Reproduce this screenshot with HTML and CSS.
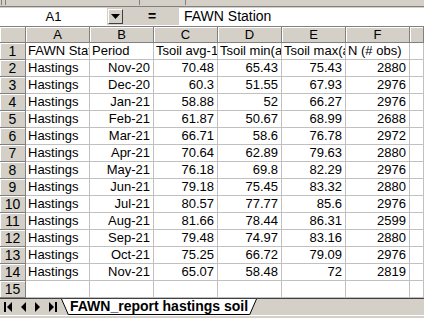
FILE: index.html
```html
<!DOCTYPE html>
<html lang="en">
<head>
  <meta charset="UTF-8">
  <title>FAWN_report hastings soil</title>
  <link rel="stylesheet" href="styles.css">
</head>
<body>

  <div class="toolbar-strip">
    <span class="grip"></span>
    <span class="sep sep-1"></span>
    <span class="sep sep-2"></span>
  </div>

  <div class="formula-bar">
    <div class="name-box">A1</div>
    <div class="name-drop">
      <svg width="9" height="5" viewBox="0 0 9 5"><polygon points="0,0 9,0 4.5,5" fill="#000"/></svg>
    </div>
    <div class="equals">=</div>
    <div class="formula-input">FAWN Station</div>
  </div>

  <div class="sheet">
    <div class="hdr corner"></div>
    <div class="hdr">A</div>
    <div class="hdr">B</div>
    <div class="hdr">C</div>
    <div class="hdr">D</div>
    <div class="hdr">E</div>
    <div class="hdr">F</div>
    <div class="hdr"></div>

    <div class="rowhdr">1</div>
    <div class="cell">FAWN Station</div>
    <div class="cell">Period</div>
    <div class="cell">Tsoil avg-10cm</div>
    <div class="cell">Tsoil min(avg)</div>
    <div class="cell">Tsoil max(avg)</div>
    <div class="cell">N (# obs)</div>
    <div class="cell"></div>

    <div class="rowhdr">2</div>
    <div class="cell">Hastings</div>
    <div class="cell num">Nov-20</div>
    <div class="cell num">70.48</div>
    <div class="cell num">65.43</div>
    <div class="cell num">75.43</div>
    <div class="cell num">2880</div>
    <div class="cell"></div>

    <div class="rowhdr">3</div>
    <div class="cell">Hastings</div>
    <div class="cell num">Dec-20</div>
    <div class="cell num">60.3</div>
    <div class="cell num">51.55</div>
    <div class="cell num">67.93</div>
    <div class="cell num">2976</div>
    <div class="cell"></div>

    <div class="rowhdr">4</div>
    <div class="cell">Hastings</div>
    <div class="cell num">Jan-21</div>
    <div class="cell num">58.88</div>
    <div class="cell num">52</div>
    <div class="cell num">66.27</div>
    <div class="cell num">2976</div>
    <div class="cell"></div>

    <div class="rowhdr">5</div>
    <div class="cell">Hastings</div>
    <div class="cell num">Feb-21</div>
    <div class="cell num">61.87</div>
    <div class="cell num">50.67</div>
    <div class="cell num">68.99</div>
    <div class="cell num">2688</div>
    <div class="cell"></div>

    <div class="rowhdr">6</div>
    <div class="cell">Hastings</div>
    <div class="cell num">Mar-21</div>
    <div class="cell num">66.71</div>
    <div class="cell num">58.6</div>
    <div class="cell num">76.78</div>
    <div class="cell num">2972</div>
    <div class="cell"></div>

    <div class="rowhdr">7</div>
    <div class="cell">Hastings</div>
    <div class="cell num">Apr-21</div>
    <div class="cell num">70.64</div>
    <div class="cell num">62.89</div>
    <div class="cell num">79.63</div>
    <div class="cell num">2880</div>
    <div class="cell"></div>

    <div class="rowhdr">8</div>
    <div class="cell">Hastings</div>
    <div class="cell num">May-21</div>
    <div class="cell num">76.18</div>
    <div class="cell num">69.8</div>
    <div class="cell num">82.29</div>
    <div class="cell num">2976</div>
    <div class="cell"></div>

    <div class="rowhdr">9</div>
    <div class="cell">Hastings</div>
    <div class="cell num">Jun-21</div>
    <div class="cell num">79.18</div>
    <div class="cell num">75.45</div>
    <div class="cell num">83.32</div>
    <div class="cell num">2880</div>
    <div class="cell"></div>

    <div class="rowhdr">10</div>
    <div class="cell">Hastings</div>
    <div class="cell num">Jul-21</div>
    <div class="cell num">80.57</div>
    <div class="cell num">77.77</div>
    <div class="cell num">85.6</div>
    <div class="cell num">2976</div>
    <div class="cell"></div>

    <div class="rowhdr">11</div>
    <div class="cell">Hastings</div>
    <div class="cell num">Aug-21</div>
    <div class="cell num">81.66</div>
    <div class="cell num">78.44</div>
    <div class="cell num">86.31</div>
    <div class="cell num">2599</div>
    <div class="cell"></div>

    <div class="rowhdr">12</div>
    <div class="cell">Hastings</div>
    <div class="cell num">Sep-21</div>
    <div class="cell num">79.48</div>
    <div class="cell num">74.97</div>
    <div class="cell num">83.16</div>
    <div class="cell num">2880</div>
    <div class="cell"></div>

    <div class="rowhdr">13</div>
    <div class="cell">Hastings</div>
    <div class="cell num">Oct-21</div>
    <div class="cell num">75.25</div>
    <div class="cell num">66.72</div>
    <div class="cell num">79.09</div>
    <div class="cell num">2976</div>
    <div class="cell"></div>

    <div class="rowhdr">14</div>
    <div class="cell">Hastings</div>
    <div class="cell num">Nov-21</div>
    <div class="cell num">65.07</div>
    <div class="cell num">58.48</div>
    <div class="cell num">72</div>
    <div class="cell num">2819</div>
    <div class="cell"></div>

    <div class="rowhdr">15</div>
    <div class="cell"></div>
    <div class="cell"></div>
    <div class="cell"></div>
    <div class="cell"></div>
    <div class="cell"></div>
    <div class="cell"></div>
    <div class="cell"></div>
  </div>

  <div class="tab-bar">
    <div class="nav-btn">
      <svg width="8" height="10" viewBox="0 0 8 10"><rect x="0" y="0" width="2" height="10" fill="#000"/><polygon points="8,0 8,10 3,5" fill="#000"/></svg>
    </div>
    <div class="nav-btn">
      <svg width="6" height="10" viewBox="0 0 6 10"><polygon points="6,0 6,10 1,5" fill="#000"/></svg>
    </div>
    <div class="nav-btn">
      <svg width="6" height="10" viewBox="0 0 6 10"><polygon points="0,0 0,10 5,5" fill="#000"/></svg>
    </div>
    <div class="nav-btn">
      <svg width="8" height="10" viewBox="0 0 8 10"><polygon points="0,0 0,10 5,5" fill="#000"/><rect x="6" y="0" width="2" height="10" fill="#000"/></svg>
    </div>
    <div class="sheet-tab">
      <svg class="slant" width="8" height="16" viewBox="0 0 8 16"><polygon points="0,0 8,0 8,16" fill="#fff"/><line x1="0.5" y1="0" x2="7.5" y2="16" stroke="#000" stroke-width="1"/></svg>
      <span class="tab-label">FAWN_report hastings soil</span>
      <svg class="slant" width="8" height="16" viewBox="0 0 8 16"><polygon points="0,0 8,0 0,16" fill="#fff"/><line x1="7.5" y1="0" x2="0.5" y2="16" stroke="#000" stroke-width="1"/></svg>
    </div>
  </div>
  <div class="status-strip"></div>

</body>
</html>
```

FILE: styles.css
```css
body {
  margin: 0;
  padding: 0;
  width: 424px;
  height: 318px;
  overflow: hidden;
  background-color: #d4d0c8;
  font-family: 'Liberation Sans', Arial, sans-serif;
  font-size: 13px;
  color: #000;
}

.toolbar-strip {
  height: 6px;
  position: relative;
  background-color: #d4d0c8;
  border-bottom: 1px solid #808080;
}

.grip {
  position: absolute;
  left: 1px;
  top: 0;
  width: 3px;
  height: 5px;
  border-left: 1px solid #808080;
  border-right: 1px solid #808080;
}

.sep {
  position: absolute;
  top: 0;
  width: 1px;
  height: 5px;
  background-color: #808080;
}

.sep-1 { left: 139px; }
.sep-2 { left: 185px; }

.formula-bar {
  display: flex;
  align-items: center;
  height: 18px;
  border-bottom: 1px solid #ffffff;
}

.name-box {
  width: 107px;
  height: 17px;
  line-height: 17px;
  background-color: #fff;
  text-align: center;
  box-sizing: border-box;
}

.name-drop {
  width: 15px;
  height: 15px;
  margin-left: 1px;
  box-sizing: border-box;
  border: 1px solid;
  border-color: #fff #404040 #404040 #fff;
  display: flex;
  align-items: center;
  justify-content: center;
}

.equals {
  width: 56px;
  text-align: center;
  font-weight: bold;
  font-size: 14px;
  padding-left: 2px;
  box-sizing: border-box;
}

.formula-input {
  flex: 1;
  height: 17px;
  line-height: 17px;
  background-color: #fff;
  padding-left: 5px;
  font-size: 14px;
}

.sheet {
  display: grid;
  grid-template-columns: 26px repeat(6, 64px) 1fr;
  grid-template-rows: 16px;
  grid-auto-rows: 17px;
  background-color: #fff;
  border-top: 1px solid #808080;
}

.hdr,
.rowhdr {
  background-color: #d4d0c8;
  border-right: 1px solid #808080;
  border-bottom: 1px solid #808080;
  box-shadow: inset 1px 1px 0 #fff;
  text-align: center;
  box-sizing: border-box;
}

.hdr {
  line-height: 15px;
}

.rowhdr {
  line-height: 16px;
  font-size: 14px;
}

.cell {
  border-right: 1px solid #c0c0c0;
  border-bottom: 1px solid #c0c0c0;
  box-sizing: border-box;
  padding: 0 3px 0 2px;
  line-height: 16px;
  font-size: 13px;
  white-space: nowrap;
  overflow: hidden;
}

.num {
  text-align: right;
}

.tab-bar {
  display: flex;
  align-items: flex-start;
  height: 16px;
  border-top: 1px solid #404040;
  background-color: #d4d0c8;
}

.nav-btn {
  width: 15px;
  height: 15px;
  display: flex;
  align-items: center;
  justify-content: center;
}

.sheet-tab {
  display: flex;
  height: 16px;
  margin-left: 1px;
}

.slant {
  display: block;
}

.tab-label {
  background-color: #fff;
  font-weight: bold;
  font-size: 14px;
  line-height: 15px;
  padding: 0 1px;
  border-bottom: 1px solid #000;
}

.status-strip {
  height: 4px;
  border-top: 1px solid #fff;
  background-color: #d4d0c8;
}
```
